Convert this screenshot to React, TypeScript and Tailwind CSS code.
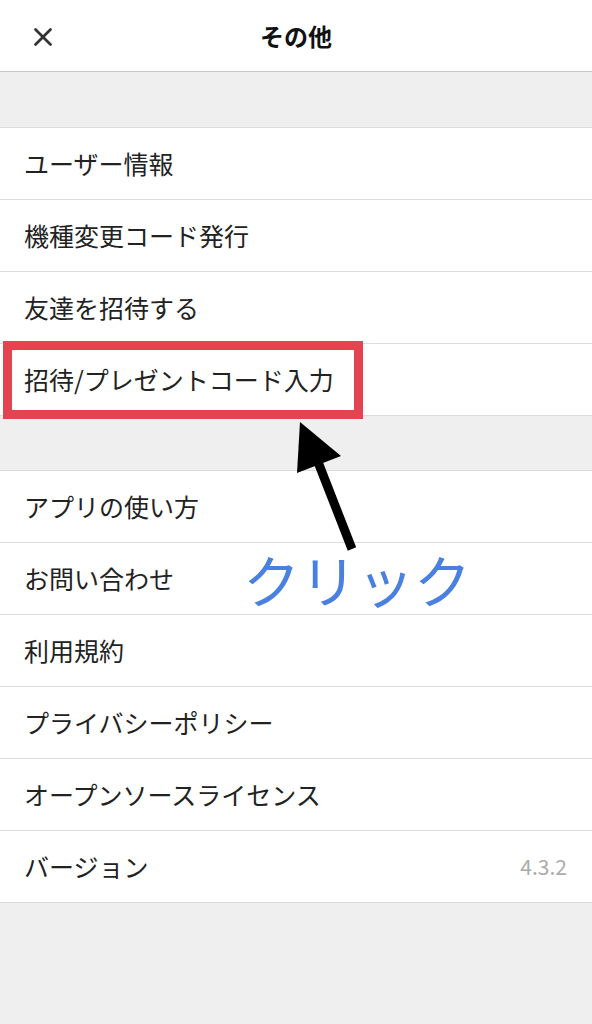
import { X } from 'lucide-react';

const groups: { label: string; value?: string }[][] = [
    [
        { label: 'ユーザー情報' },
        { label: '機種変更コード発行' },
        { label: '友達を招待する' },
        { label: '招待/プレゼントコード入力' },
    ],
    [
        { label: 'アプリの使い方' },
        { label: 'お問い合わせ' },
        { label: '利用規約' },
        { label: 'プライバシーポリシー' },
        { label: 'オープンソースライセンス' },
        { label: 'バージョン', value: '4.3.2' },
    ],
];

const font = "font-['Noto_Sans_CJK_JP','Noto_Sans',sans-serif]";

export default function App() {
    return (
        <div className={`relative min-h-[1024px] w-[592px] bg-[#efefef] ${font}`}>
            <header className="relative flex h-[72px] items-center justify-center border-b border-[#c6c6c6] bg-white">
                <button className="absolute left-[28px] top-[22px] text-[#333]" aria-label="close">
                    <X size={30} strokeWidth={2.2} />
                </button>
                <h1 className="text-[24px] font-bold text-[#111]">その他</h1>
            </header>

            <div className="flex flex-col gap-[54px] pt-[55px]">
                {groups.map((group, i) => (
                    <ul className="border-t border-[#dcdcdc] bg-white" key={i}>
                        {group.map((row) => (
                            <li
                                className="flex h-[72px] items-center justify-between border-b border-[#dcdcdc] pl-[24px] pr-[25px]"
                                key={row.label}
                            >
                                <span className="text-[25px] text-[#222]">{row.label}</span>
                                {row.value && <span className="text-[21px] text-[#ababab]">{row.value}</span>}
                            </li>
                        ))}
                    </ul>
                ))}
            </div>

            {/* annotation overlay */}
            <div className="absolute left-[3px] top-[341px] h-[78px] w-[360px] border-[9px] border-[#e5434f]" />
            <svg className="absolute left-0 top-0" width="592" height="1024" viewBox="0 0 592 1024">
                <line x1="352" y1="549" x2="318" y2="462" stroke="#000" strokeWidth="9" />
                <polygon points="300,422 297,473 341,456" fill="#000" />
            </svg>
            <span className="absolute left-[243px] top-[538px] text-[57px] leading-[80px] text-[#4a80e0]">
                クリック
            </span>
        </div>
    );
}
